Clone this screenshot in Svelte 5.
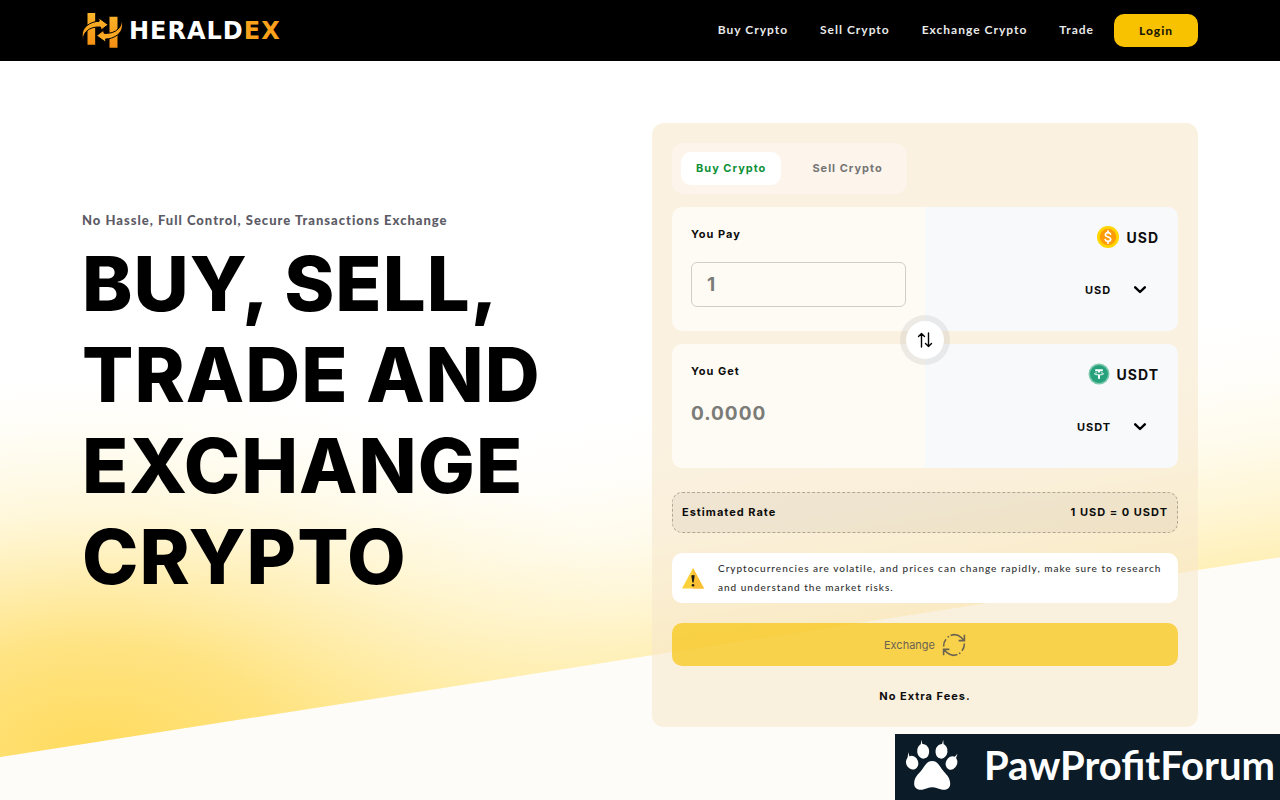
<script>
  let mode = $state('buy');
  let amount = $state('1');
  const links = ['Buy Crypto', 'Sell Crypto', 'Exchange Crypto', 'Trade'];
  const headline = ['BUY, SELL,', 'TRADE AND', 'EXCHANGE', 'CRYPTO'];
</script>

{#snippet chevron()}
  <svg class="chevron" viewBox="0 0 12 8" aria-hidden="true">
    <path d="M1.2 1.3 L6 6 L10.8 1.3" fill="none" stroke="#000" stroke-width="2.4" stroke-linecap="round" stroke-linejoin="round" />
  </svg>
{/snippet}

<header>
  <div class="container bar">
    <a class="logo" href="#home">
      <svg viewBox="0 0 120 105" aria-hidden="true">
        <defs>
          <linearGradient id="gold" x1="0" y1="0" x2="0" y2="1">
            <stop offset="0" stop-color="#fdb52a" />
            <stop offset="1" stop-color="#f58e12" />
          </linearGradient>
        </defs>
        <path d="M15 0H38V95H15ZM81 11H105V104H81Z" fill="url(#gold)" />
        <g fill="url(#gold)" stroke="#000" stroke-width="3" stroke-linejoin="round">
          <path d="M2 83C-4 66 -1 49 13 38C24 29 38 25 50 25L49 15L77 35L56 51L54 42C36 41 22 45 12 55C5 62 2 71 2 83Z" />
          <path transform="rotate(180 59.5 51.5)" d="M2 83C-4 66 -1 49 13 38C24 29 38 25 50 25L49 15L77 35L56 51L54 42C36 41 22 45 12 55C5 62 2 71 2 83Z" />
        </g>
      </svg>
      <span class="word">HERALD<span>EX</span></span>
    </a>
    <nav>
      {#each links as link}<a href="#top">{link}</a>{/each}
      <button class="login">Login</button>
    </nav>
  </div>
</header>

<main>
  <svg class="glow" viewBox="0 0 1280 740" preserveAspectRatio="none" aria-hidden="true">
    <defs>
      <linearGradient id="rise" gradientUnits="userSpaceOnUse" x1="640" y1="600" x2="602" y2="360">
        <stop offset="0" stop-color="#fff0b8" />
        <stop offset="0.25" stop-color="#fff6d6" />
        <stop offset="0.5" stop-color="#fffbec" />
        <stop offset="0.8" stop-color="#fffefb" />
        <stop offset="1" stop-color="#fff" />
      </linearGradient>
      <radialGradient id="corner" gradientUnits="userSpaceOnUse" cx="0" cy="0" r="1" gradientTransform="translate(90 690) scale(620 370)">
        <stop offset="0" stop-color="#ffdb5e" />
        <stop offset="0.3" stop-color="#ffdf70" stop-opacity="0.82" />
        <stop offset="0.65" stop-color="#ffe890" stop-opacity="0.32" />
        <stop offset="1" stop-color="#fff3c0" stop-opacity="0" />
      </radialGradient>
    </defs>
    <rect width="1280" height="740" fill="#fefcf8" />
    <path d="M0 0H1280V497L0 697Z" fill="url(#rise)" />
    <path d="M0 0H1280V497L0 697Z" fill="url(#corner)" />
  </svg>

  <div class="container hero">
    <section class="intro">
      <p>No Hassle, Full Control, Secure Transactions Exchange</p>
      <h1>{#each headline as line}<span>{line} </span>{/each}</h1>
    </section>

    <form class="card" onsubmit={(e) => e.preventDefault()}>
      <div class="tabs">
        <button type="button" class:active={mode === 'buy'} onclick={() => (mode = 'buy')}>Buy Crypto</button>
        <button type="button" class:active={mode === 'sell'} onclick={() => (mode = 'sell')}>Sell Crypto</button>
      </div>

      <div class="pair">
        <div class="box">
          <div class="amount">
            <label for="pay">You Pay</label>
            <input id="pay" class="framed" type="text" bind:value={amount} />
          </div>
          <div class="asset">
            <div class="coin">
              <svg viewBox="0 0 22 22" aria-hidden="true">
                <circle cx="11" cy="11" r="11" fill="#ffd500" />
                <circle cx="11" cy="11" r="8.2" fill="#ff9a08" />
                <path d="M13.6 8.2C13.2 7.2 12.2 6.7 11 6.7C9.5 6.7 8.4 7.4 8.4 8.7C8.4 11.6 13.7 10.3 13.7 13.2C13.7 14.6 12.5 15.3 11 15.3C9.6 15.3 8.5 14.7 8.2 13.6M11 4.8V6.8M11 15.2V17.2" fill="none" stroke="#fff" stroke-width="1.7" stroke-linecap="round" />
              </svg>
              <span>USD</span>
            </div>
            <div class="picker">
              <select aria-label="Pay currency"><option>USD</option></select>
              {@render chevron()}
            </div>
          </div>
        </div>

        <div class="box">
          <div class="amount">
            <label for="get">You Get</label>
            <input id="get" type="text" placeholder="0.0000" />
          </div>
          <div class="asset">
            <div class="coin">
              <svg viewBox="0 0 22 22" aria-hidden="true">
                <circle cx="11" cy="11" r="10.5" fill="#7cc9ad" />
                <circle cx="11" cy="11" r="9" fill="#26a17b" />
                <path d="M7.2 6.2H14.8V8.2H12V9.6H10V8.2H7.2ZM10 12H12V15.8H10Z" fill="#fff" />
                <path d="M9 9.8Q6.4 10.1 6.4 10.8Q6.6 11.9 11 11.9Q15.4 11.9 15.6 10.8Q15.6 10.1 13 9.8" fill="none" stroke="#fff" stroke-width="0.9" />
              </svg>
              <span>USDT</span>
            </div>
            <div class="picker">
              <select aria-label="Receive currency"><option>USDT</option></select>
              {@render chevron()}
            </div>
          </div>
        </div>

        <button type="button" class="swap" aria-label="Swap currencies">
          <svg viewBox="0 0 16 16" aria-hidden="true">
            <path d="M4.5 15V1.5M1.5 4.5L4.5 1.5L7.5 4.5M11.5 1V14.5M8.5 11.5L11.5 14.5L14.5 11.5" fill="none" stroke="#000" stroke-width="1.4" stroke-linecap="round" stroke-linejoin="round" />
          </svg>
        </button>
      </div>

      <div class="rate"><span>Estimated Rate</span><span>1 USD = 0 USDT</span></div>

      <div class="notice">
        <svg viewBox="0 0 22 22" aria-hidden="true">
          <path d="M11 1L22 21.5H0Z" fill="#fdd13a" />
          <path d="M11 1L22 21.5H11Z" fill="#fbbf36" />
          <path d="M9.3 8.5Q11 7.6 12.7 8.5L11.6 15.5H10.4Z" fill="#1c1a14" />
          <circle cx="11" cy="18.3" r="1.3" fill="#1c1a14" />
        </svg>
        <p>Cryptocurrencies are volatile, and prices can change rapidly, make sure to research and understand the market risks.</p>
      </div>

      <button class="submit">
        Exchange
        <svg viewBox="0 0 24 24" fill="none" stroke="#6b6351" stroke-width="1.6" aria-hidden="true">
          <path d="M5.6 4.2L7 3.3M8.6 2.4C12.4 1 16.2 1.8 19 4.3L21.6 7M22.4 1.8V7.6H16.6" />
          <path d="M18.4 19.8L17 20.7M15.4 21.6C11.6 23 7.8 22.2 5 19.7L2.4 17M1.6 22.2V16.4H7.4" />
          <path d="M4 6.2C2.4 8 1.6 10.4 1.6 13.4M20 17.8C21.6 16 22.4 13.6 22.4 10.6" />
        </svg>
      </button>
      <p class="fees">No Extra Fees.</p>
    </form>
  </div>
</main>

<aside>
  <svg viewBox="78 26 158 156" fill="#fff" aria-hidden="true">
    <path d="M159 92C143 92 137 107 127 120C118 132 106 139 105 158C104 173 115 180 129 178C141 176 148 171 159 171C170 171 178 176 190 178C204 180 214 173 213 158C212 140 200 132 191 120C181 107 175 92 159 92Z" />
    <ellipse cx="99" cy="97" rx="18" ry="21" transform="rotate(-22 99 97)" />
    <ellipse cx="132" cy="63" rx="18" ry="22" transform="rotate(-8 132 63)" />
    <ellipse cx="187" cy="63" rx="18" ry="22" transform="rotate(8 187 63)" />
    <ellipse cx="217" cy="98" rx="17" ry="21" transform="rotate(22 217 98)" />
    <path d="M85 82L88 66L91 80ZM124 46L127 28L130 44ZM188 44L192 28L194 47ZM226 80L235 70L230 85Z" />
  </svg>
  <span>PawProfitForum</span>
</aside>

<style>
  :global(body) {
    margin: 0;
    background: #fefcf8;
    font-family: Inter, "Liberation Sans", sans-serif;
    letter-spacing: 1px;
    color: #0d0d0d;
  }
  * { box-sizing: border-box; }
  p, h1 { margin: 0; }
  a { color: inherit; text-decoration: none; }
  button, input, select { font-family: inherit; letter-spacing: inherit; color: inherit; border: 0; }
  button { cursor: pointer; }

  .container { max-width: 1140px; margin: 0 auto; padding: 0 12px; }
  header { background: #000; color: #e9e9e9; }
  .bar { display: flex; align-items: center; justify-content: space-between; height: 61px; }
  .logo { display: flex; align-items: center; gap: 6px; }
  .logo svg { width: 41px; height: 35px; }
  .word { font: 700 24px "DejaVu Sans", sans-serif; color: #fff; }
  .word span { color: #fba11b; }
  nav { display: flex; align-items: center; gap: 32px; font: 700 12px Lato, sans-serif; }
  nav a { padding-bottom: 3px; }
  .login { margin-left: -12px; width: 84px; height: 33px; padding: 0; border-radius: 10px; background: #f9c200; color: #1e1a08; font: 900 12px Lato, sans-serif; }

  main { position: relative; min-height: 739px; }
  .glow { position: absolute; inset: 0; width: 100%; height: 100%; }
  .hero { position: relative; display: grid; grid-template-columns: 1fr 1fr; gap: 24px; padding-top: 62px; padding-bottom: 73px; }
  .intro { padding-top: 87px; }
  .intro p { font: 900 13px/20px Lato, sans-serif; color: #5c5b66; }
  h1 { font-size: 76px; line-height: 91px; font-weight: 800; color: #000; margin-top: 8px; }
  h1 span { display: block; white-space: nowrap; }

  .card { background: #f7e7cd99; border-radius: 12px; padding: 20px 20px 21px; display: flex; flex-direction: column; }
  .tabs { align-self: flex-start; display: flex; gap: 16px; padding: 9px; border-radius: 12px; background: #fdf5ec; }
  .tabs button { height: 33px; padding: 0 15px 2px; border-radius: 10px; background: none; color: #757575; font-size: 11px; font-weight: 700; }
  .tabs .active { background: #fff; color: #0f9138; }

  .pair { position: relative; display: grid; gap: 13px; margin-top: 13px; }
  .box { display: grid; grid-template-columns: 1fr 1fr; height: 124px; border-radius: 10px; overflow: hidden; }
  .amount { background: #fefbf4; padding: 19px; }
  .amount label { display: block; font-size: 11px; font-weight: 700; line-height: 16px; }
  .amount input { display: block; width: 100%; background: transparent; font-size: 19px; font-weight: 700; color: #7b7b78; margin-top: 12px; height: 45px; padding: 0; }
  .amount input::placeholder { color: #7b7b78; opacity: 1; }
  .amount .framed { margin-top: 20px; border: 1px solid #cfcecb; border-radius: 6px; padding: 0 15px; }
  .asset { background: #f8f9fb; display: flex; flex-direction: column; align-items: flex-end; padding: 19px; }
  .coin { display: flex; align-items: center; gap: 7px; height: 22px; font-size: 14px; font-weight: 700; }
  .coin svg { width: 22px; height: 22px; }
  .picker { display: grid; align-items: center; margin-top: 30px; }
  .picker > * { grid-area: 1 / 1; }
  select { appearance: none; background: transparent; font-size: 11px; font-weight: 700; height: 24px; padding: 0 47px 0 0; }
  .chevron { width: 12px; height: 8px; justify-self: end; margin-right: 13px; pointer-events: none; }
  .swap { position: absolute; left: 50%; top: 50%; transform: translate(-50%, -50%); margin-top: 2px; width: 50px; height: 50px; border: 6px solid #9b9b9b2b; background: #fff; background-clip: padding-box; border-radius: 50%; padding: 0; display: grid; place-items: center; }
  .swap svg { width: 16px; height: 16px; }

  .rate { display: flex; justify-content: space-between; align-items: center; height: 41px; margin-top: 24px; padding: 0 9px 2px; border: 1px dashed #b0a894; border-radius: 10px; background: #0000000b; font-size: 11px; font-weight: 700; }
  .notice { display: flex; align-items: center; gap: 14px; margin-top: 20px; min-height: 50px; padding: 6px 10px; border-radius: 10px; background: #fff; }
  .notice svg { flex: none; width: 22px; height: 22px; }
  .notice p { font: 500 10px/19px Lato, sans-serif; color: #303030; }
  .submit { display: flex; align-items: center; justify-content: center; gap: 7px; height: 43px; margin-top: 20px; border-radius: 10px; background: #f9c200a8; color: #6b6351; font-size: 11px; letter-spacing: normal; }
  .submit svg { width: 24px; height: 24px; }
  .fees { margin-top: 20px; text-align: center; font-size: 11px; line-height: 20px; font-weight: 700; }

  aside { position: fixed; right: 0; bottom: 0; height: 66px; display: flex; align-items: center; gap: 26px; padding: 0 5px 4px 10px; background: #0b1b27; color: #fff; font: 700 40px Lato, sans-serif; letter-spacing: 0; }
  aside svg { width: 53px; height: 52px; }
</style>
